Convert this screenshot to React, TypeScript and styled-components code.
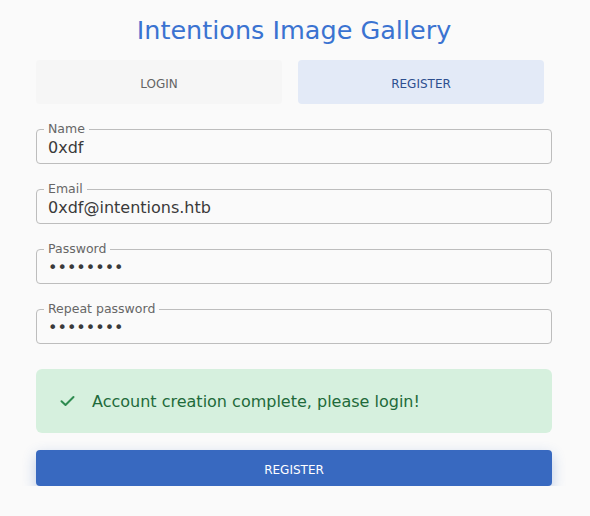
import React from "react";
import styled, { createGlobalStyle } from "styled-components";

const Global = createGlobalStyle`
  html, body { margin: 0; padding: 0; background: #fafafa; }
  body { font-family: "DejaVu Sans", "Liberation Sans", sans-serif; }
  * { box-sizing: border-box; }
`;

const Page = styled.div`
  width: 516px;
  margin-left: 36px;
  padding-top: 15px;
  display: flex;
  flex-direction: column;
`;

const Title = styled.h1`
  margin: 0;
  font-size: 25.5px;
  font-weight: 400;
  line-height: 30px;
  color: #3a73d1;
  text-align: center;
`;

const Tabs = styled.div`
  margin-top: 15px;
  width: 508px;
  display: grid;
  grid-template-columns: 1fr 1fr;
  gap: 16px;
`;

const Tab = styled.button<{ $active?: boolean }>`
  height: 44px;
  border: none;
  border-radius: 4px;
  padding: 3px 0 0;
  font-family: inherit;
  font-size: 12px;
  text-transform: uppercase;
  background: ${(p) => (p.$active ? "#e3eaf7" : "#f6f6f6")};
  color: ${(p) => (p.$active ? "#2d4f8f" : "#646464")};
  cursor: pointer;
`;

const Form = styled.form`
  margin-top: 25px;
  display: flex;
  flex-direction: column;
  gap: 25px;
`;

const Field = styled.label`
  position: relative;
  display: flex;
  align-items: center;
  height: 35px;
  border: 1px solid #bdbdbd;
  border-radius: 4px;
  padding: 0 11px;
`;

const FieldLabel = styled.span`
  position: absolute;
  top: -9px;
  left: 7px;
  padding: 0 4px;
  background: #fafafa;
  font-size: 12.5px;
  line-height: 16px;
  color: #666666;
`;

const Input = styled.input<{ $secret?: boolean }>`
  width: 100%;
  border: none;
  outline: none;
  background: transparent;
  padding: 0;
  margin-top: 1px;
  font-family: "DejaVu Sans", sans-serif;
  font-size: 16px;
  color: #3a3a3a;
  letter-spacing: 0;
`;

const Alert = styled.div`
  margin-top: 25px;
  height: 64px;
  border-radius: 6px;
  background: #d6f0de;
  display: flex;
  align-items: center;
  padding-left: 24px;
  gap: 17px;
  color: #1e6a3a;
  font-size: 16px;
`;

const SubmitButton = styled.button`
  margin-top: 17px;
  height: 36px;
  border: none;
  border-radius: 4px;
  padding: 3px 0 0;
  background: #3869c0;
  color: #ffffff;
  font-family: inherit;
  font-size: 12px;
  text-transform: uppercase;
  box-shadow: 0 5px 14px rgba(56, 105, 193, 0.32);
  cursor: pointer;
`;

const CheckIcon = () => (
  <svg width="15" height="12" viewBox="0 0 15 12" fill="none">
    <path d="M1.5 6.2 L5.5 10 L13.5 2" stroke="#2e8b50" strokeWidth="2" strokeLinecap="round" strokeLinejoin="round" />
  </svg>
);

const fields = [
  { label: "Name", value: "0xdf", secret: false },
  { label: "Email", value: "0xdf@intentions.htb", secret: false },
  { label: "Password", value: "password", secret: true },
  { label: "Repeat password", value: "password", secret: true },
];

export default function App() {
  return (
    <>
      <Global />
      <Page>
        <Title>Intentions Image Gallery</Title>
        <Tabs>
          <Tab type="button">Login</Tab>
          <Tab type="button" $active>
            Register
          </Tab>
        </Tabs>
        <Form onSubmit={(e) => e.preventDefault()}>
          {fields.map((f) => (
            <Field key={f.label}>
              <FieldLabel>{f.label}</FieldLabel>
              <Input
                type={f.secret ? "password" : "text"}
                defaultValue={f.value}
                $secret={f.secret}
                readOnly
              />
            </Field>
          ))}
        </Form>
        <Alert>
          <CheckIcon />
          <span>Account creation complete, please login!</span>
        </Alert>
        <SubmitButton type="button">Register</SubmitButton>
      </Page>
    </>
  );
}
